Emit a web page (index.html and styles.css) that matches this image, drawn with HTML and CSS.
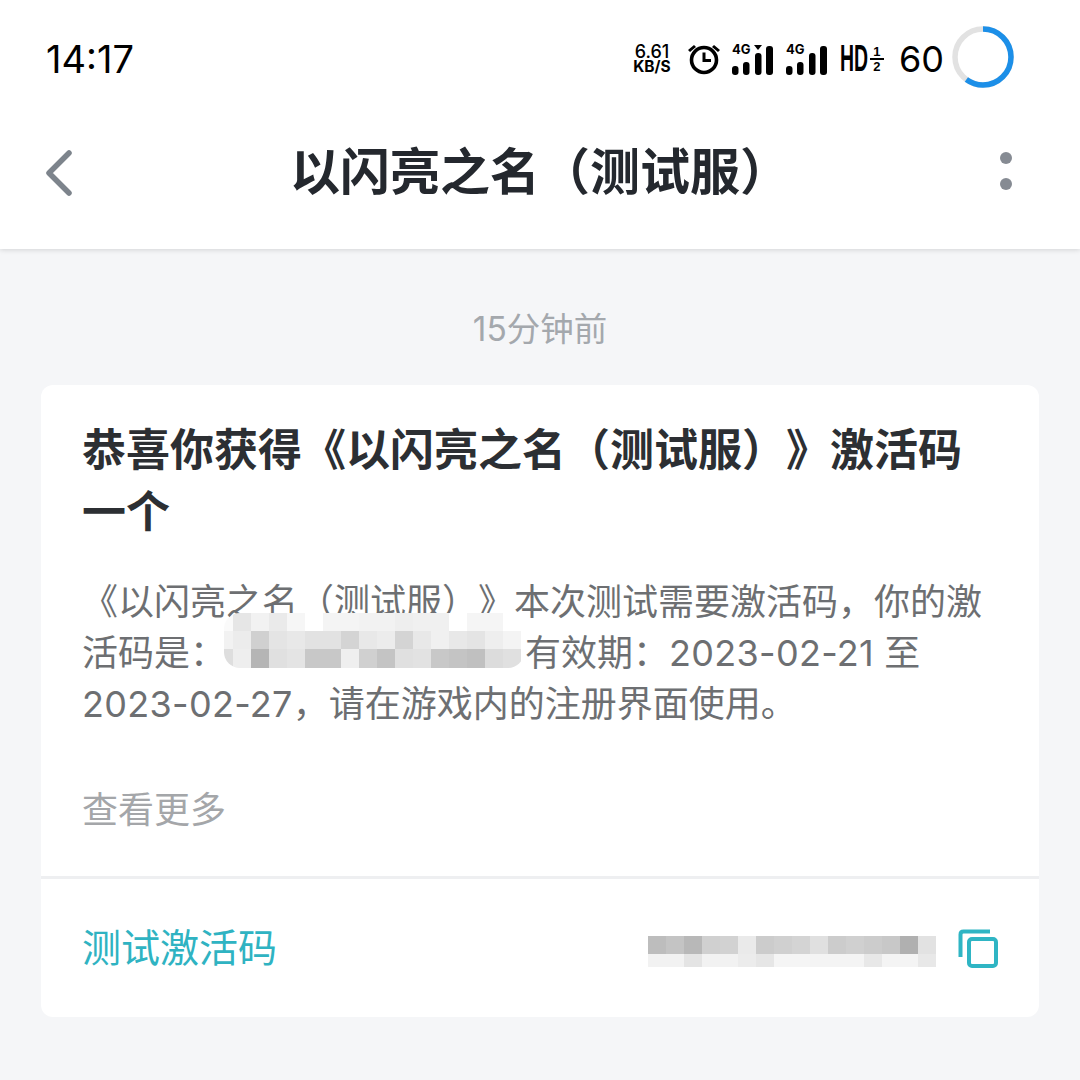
FILE: index.html
```html
<!DOCTYPE html>
<html lang="zh-CN">
<head>
  <meta charset="UTF-8" />
  <meta name="viewport" content="width=device-width, initial-scale=1.0" />
  <title>以闪亮之名（测试服）</title>
  <link rel="stylesheet" href="styles.css">
</head>
<body>
  <!-- Top white area: status bar and title bar -->
  <header class="top">
    <div class="status-bar">
      <div class="clock">14:17</div>
      <div class="status-icons">
        <div class="speed"><span>6.61</span><span class="speed-unit">KB/S</span></div>
        <svg class="alarm" width="34" height="32" viewBox="0 0 34 32">
          <circle cx="17" cy="17" r="12.5" fill="none" stroke="#000" stroke-width="3.6"/>
          <path d="M17 9.5V17.5H24" fill="none" stroke="#000" stroke-width="3"/>
          <path d="M1 7L7 2L9 4L3 9ZM33 7L27 2L25 4L31 9Z"/>
        </svg>
        <div class="signal">
          <span class="signal-label">4G</span>
          <svg width="42" height="30" viewBox="0 0 42 30">
            <rect x="0" y="21" width="6.5" height="9" rx="3"/>
            <rect x="11" y="17" width="6.5" height="13" rx="3"/>
            <rect x="23" y="8" width="6.5" height="22" rx="3"/>
            <rect x="34" y="1" width="7" height="29" rx="3"/>
            <path d="M22 0H30L26 5Z"/>
          </svg>
        </div>
        <div class="signal">
          <span class="signal-label">4G</span>
          <svg width="42" height="30" viewBox="0 0 42 30">
            <rect x="0" y="21" width="6.5" height="9" rx="3"/>
            <rect x="11" y="17" width="6.5" height="13" rx="3"/>
            <rect x="23" y="8" width="6.5" height="22" rx="3"/>
            <rect x="34" y="1" width="7" height="29" rx="3"/>
          </svg>
        </div>
        <div class="hd">
          <span class="hd-text">HD</span>
          <span class="hd-sims"><span>1</span><span class="hd-sim-two">2</span></span>
        </div>
        <div class="battery-num">60</div>
        <svg class="battery-ring" width="62" height="62" viewBox="0 0 62 62">
          <circle cx="31" cy="31" r="28" fill="none" stroke="#e2e2e2" stroke-width="5.5"/>
          <circle cx="31" cy="31" r="28" fill="none" stroke="#1c8fe8" stroke-width="5.5"
            stroke-dasharray="105.6 176" transform="rotate(-90 31 31)"/>
        </svg>
      </div>
    </div>
    <div class="title-bar">
      <svg class="back" width="30" height="48" viewBox="0 0 30 48">
        <path d="M25 4L5 24L25 44" fill="none" stroke="#7d848c" stroke-width="5.5" stroke-linecap="round" stroke-linejoin="round"/>
      </svg>
      <h1>以闪亮之名（测试服）</h1>
      <div class="more"><i></i><i></i></div>
    </div>
  </header>

  <main class="content">
    <div class="msg-time">15分钟前</div>

    <!-- Message card -->
    <section class="card">
      <div class="card-body">
        <h2>恭喜你获得《以闪亮之名（测试服）》激活码<br>一个</h2>
        <p class="msg-text">《以闪亮之名（测试服）》本次测试需要激活码，你的激<br>活码是：<span class="code-hole"><span class="mosaic mosaic-a"></span></span>有效期：<span class="num">2023-02-21</span> 至<br><span class="num">2023-02-27</span>，请在游戏内的注册界面使用。</p>
        <div class="see-more">查看更多</div>
      </div>
      <div class="card-foot">
        <span class="code-label">测试激活码</span>
        <div class="code-value">
          <span class="mosaic mosaic-b"></span>
          <svg class="copy" width="46" height="42" viewBox="0 0 46 42">
            <path d="M7.5 30V7.5Q7.5 4.5 10.5 4.5H37" fill="none" stroke="#2fb5c4" stroke-width="4"/>
            <rect x="16" y="12" width="27" height="27" rx="3" fill="none" stroke="#2fb5c4" stroke-width="4"/>
          </svg>
        </div>
      </div>
    </section>
  </main>
</body>
</html>
```

FILE: styles.css
```css
/* Base Reset */
*, *::before, *::after {
  box-sizing: border-box;
  margin: 0;
  padding: 0;
}
body {
  width: 1080px;
  height: 1080px;
  overflow: hidden;
  background: #f5f6f8;
  font-family: "Noto Sans CJK SC", "Noto Sans", sans-serif;
  color: #24282e;
  text-spacing-trim: space-all;
}

/* Header */
.top {
  height: 249px;
  background: #fff;
  box-shadow: 0 1px 5px rgba(0,0,0,0.14);
}
.status-bar {
  height: 118px;
  display: flex;
  align-items: center;
  justify-content: space-between;
  padding: 0 66px 0 46px;
  color: #000;
  font-family: Inter, Roboto, sans-serif;
}
.clock {
  font-size: 38px;
  font-weight: 400;
}
.status-icons {
  display: flex;
  align-items: center;
}
.speed {
  display: flex;
  flex-direction: column;
  align-items: center;
  width: 40px;
  font-size: 18px;
  font-weight: 500;
  line-height: 15px;
  margin-right: 15px;
}
.speed-unit {
  font-size: 15.5px;
  font-weight: 700;
}
.alarm { margin-right: 11px; }
.signal {
  position: relative;
  width: 42px;
  height: 30px;
  margin-right: 12px;
  margin-top: 2px;
}
.signal svg { display: block; }
.signal-label {
  position: absolute;
  left: 0;
  top: -2px;
  font-size: 13px;
  font-weight: 700;
  line-height: 13px;
}
.hd {
  display: flex;
  align-items: center;
  width: 44px;
  margin-right: 15px;
  font-family: "Liberation Sans", sans-serif;
}
.hd-text {
  width: 28px;
  font-size: 36px;
  font-weight: 700;
  line-height: 30px;
  transform: scaleX(0.54);
  transform-origin: left center;
}
.hd-sims {
  width: 15px;
  margin-left: 2px;
  display: flex;
  flex-direction: column;
  text-align: center;
  font-size: 13px;
  font-weight: 700;
  line-height: 13px;
}
.hd-sim-two { border-top: 2px solid #000; }
.battery-num {
  font-size: 36px;
  margin-right: 8px;
}
.battery-ring { margin-top: -4px; }

/* Title bar */
.title-bar {
  position: relative;
  height: 112px;
  display: flex;
  align-items: center;
  justify-content: center;
  padding-bottom: 12px;
}
.title-bar h1 {
  font-size: 50px;
  font-weight: 700;
  line-height: 60px;
}
.back {
  position: absolute;
  left: 44px;
  top: 31px;
}
.more {
  position: absolute;
  right: 68px;
  top: 34px;
  display: flex;
  flex-direction: column;
  gap: 14px;
}
.more i {
  display: block;
  width: 12px;
  height: 12px;
  border-radius: 50%;
  background: #868b93;
}

/* Message */
.content { padding: 0 41px; }
.msg-time {
  height: 136px;
  padding-top: 18px;
  display: flex;
  align-items: center;
  justify-content: center;
  font-size: 33.5px;
  color: #a4a8ad;
  font-family: Inter, "Noto Sans CJK SC", sans-serif;
}
.card {
  height: 632px;
  background: #fff;
  border-radius: 12px;
  display: flex;
  flex-direction: column;
}
.card-body {
  height: 494px;
  padding: 31px 41px 0;
  border-bottom: 3px solid #eeeff1;
}
.card-body h2 {
  font-size: 44px;
  font-weight: 700;
  line-height: 62px;
  color: #2c2f33;
}
.msg-text {
  margin-top: 37px;
  font-size: 36px;
  line-height: 51px;
  color: #6d6f72;
  font-family: Inter, "Noto Sans CJK SC", sans-serif;
}
.num { letter-spacing: 0.3px; }
.see-more {
  margin-top: 52px;
  font-size: 36px;
  line-height: 51px;
  color: #a4a6a9;
}

/* Hidden codes are pixelated in the screenshot: 18px cells, one gradient per row */
.code-hole {
  position: relative;
  display: inline-block;
  width: 299px;
  height: 1px;
}
.mosaic { display: block; }
.mosaic-a {
  position: absolute;
  left: -2px;
  top: -52px;
  width: 300px;
  height: 55px;
  border-radius: 16px;
  background:
    linear-gradient(90deg, #dedede 0 9px, #eee 9px 27px, #b5b5b5 27px 45px, #e0e0e0 45px 63px, #e4e4e4 63px 81px, #c8c8c8 81px 117px, #efefef 117px 135px, #d0d0d0 135px 153px, #c4c4c4 153px 171px, #e0e0e0 171px 189px, #e2e2e2 189px 207px, #c8c8c8 207px 225px, #c4c4c4 225px 243px, #c0c0c0 243px 261px, #dcdcdc 261px 279px, #e0e0e0 279px 297px, #fff 297px) 0 36px / 100% 19px no-repeat,
    linear-gradient(90deg, #f2f2f2 0 9px, #ececec 9px 27px, #d0d0d0 27px 45px, #e4e4e4 45px 63px, #e8e8e8 63px 81px, #e2e2e2 81px 117px, #d4d4d4 117px 135px, #e8e8e8 135px 153px, #ececec 153px 171px, #d4d4d4 171px 189px, #e8e8e8 189px 207px, #f0f0f0 207px 225px, #e8e8e8 225px 243px, #e4e4e4 243px 261px, #eee 261px 279px, #f4f4f4 279px 297px, #fff 297px) 0 18px / 100% 18px no-repeat,
    linear-gradient(90deg, #fafafa 0 9px, #e6e6e6 9px 27px, #f2f2f2 27px 45px, #eaeaea 45px 63px, #f6f6f6 63px 81px, #fff 81px 99px, #f4f4f4 99px 135px, #f2f2f2 135px 171px, #eee 171px 189px, #f0f0f0 189px 225px, #fff 225px 243px, #f5f5f5 243px 279px, #fff 279px) 0 0 / 100% 18px no-repeat,
    #fff;
}
.mosaic-b {
  width: 288px;
  height: 31px;
  margin-top: 7px;
  margin-right: 17px;
  background:
    linear-gradient(90deg, #bdbdbd 0 18px, #c4c4c4 18px 36px, #b8b8b8 36px 54px, #d0d0d0 54px 72px, #d2d2d2 72px 90px, #eaeaea 90px 108px, #ccc 108px 126px, #d0d0d0 126px 144px, #d4d4d4 144px 162px, #e0e0e0 162px 180px, #ccc 180px 198px, #d0d0d0 198px 216px, #ccc 216px 234px, #c8c8c8 234px 252px, #b0b0b0 252px 270px, #e2e2e2 270px) 0 0 / 100% 18px no-repeat,
    linear-gradient(90deg, #f2f2f2 0 36px, #e4e4e4 36px 54px, #f2f2f2 54px 90px, #ececec 90px 108px, #e6e6e6 108px 126px, #f5f5f5 126px 162px, #f4f4f4 162px 216px, #e8e8e8 216px 234px, #f4f4f4 234px 270px, #e8e8e8 270px 288px) 0 18px / 100% 13px no-repeat;
}

/* Card footer */
.card-foot {
  flex: 1;
  display: flex;
  align-items: center;
  justify-content: space-between;
  padding: 0 40px 0 41px;
}
.code-label {
  padding-bottom: 6px;
  font-size: 39px;
  color: #2fb3c2;
}
.code-value {
  display: flex;
  align-items: center;
}
```
